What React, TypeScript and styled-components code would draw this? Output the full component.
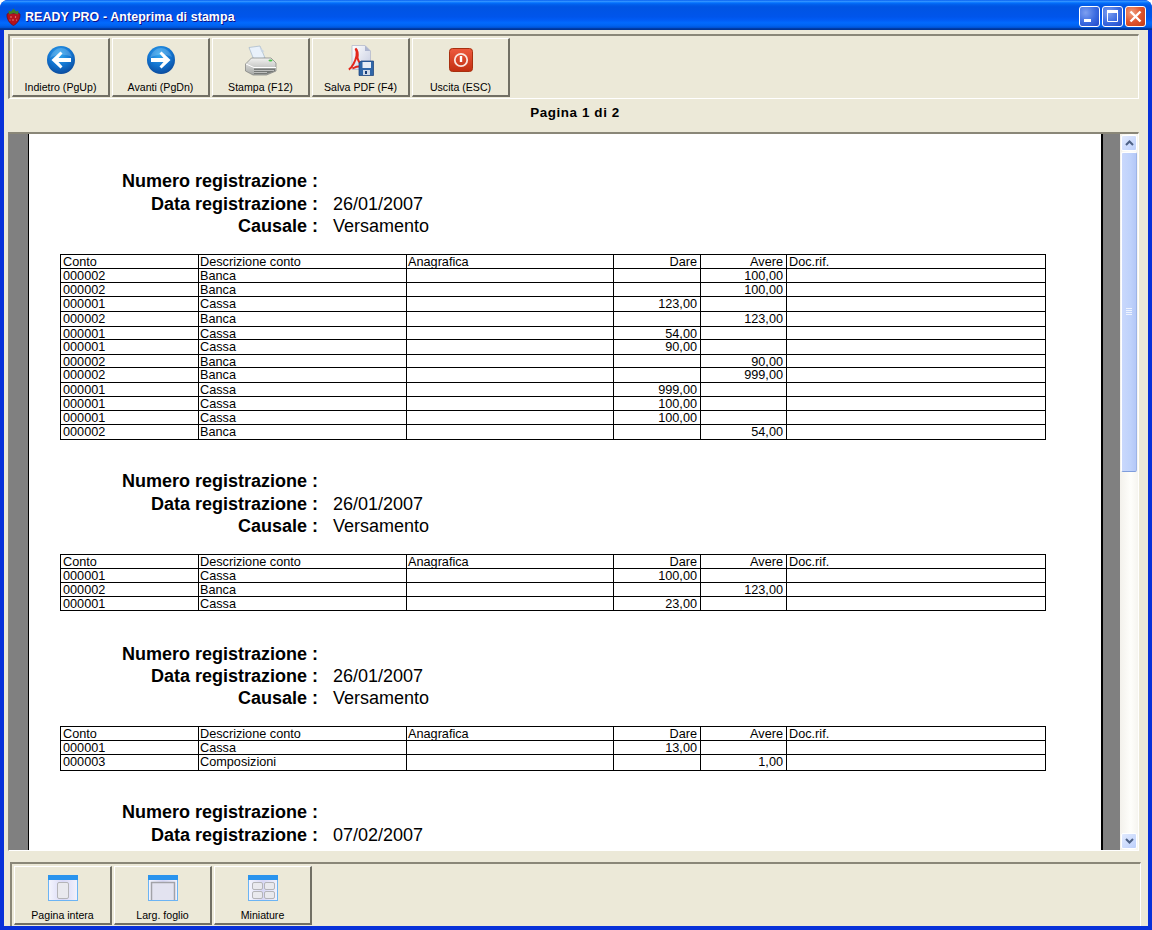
import React from "react";
import styled, { createGlobalStyle } from "styled-components";

const Global = createGlobalStyle`
  html, body { margin: 0; padding: 0; background: #fff; overflow: hidden; }
  #root { width: 1152px; height: 930px; }
  * { box-sizing: border-box; }
`;

const Win = styled.div`
  width: 1152px;
  height: 930px;
  display: flex;
  flex-direction: column;
  background: #0831d9;
  border-radius: 8px 8px 0 0;
  overflow: hidden;
  font-family: "Liberation Sans", Arial, sans-serif;
`;

const TitleBar = styled.div`
  height: 30px;
  flex: none;
  display: flex;
  align-items: center;
  padding: 0 6px 0 6px;
  background: linear-gradient(180deg, #0058ee 0%, #3593ff 4%, #288eff 6%, #127dff 8%, #036ffc 10%, #0262ee 14%, #0057e5 20%, #0054e3 24%, #0055eb 56%, #005bf5 66%, #026afe 76%, #0062ef 86%, #0052d6 92%, #0040ab 94%, #003092 100%);
`;

const TitleIcon = styled.div`
  display: flex;
  margin-top: 3px;
`;

const TitleText = styled.span`
  margin: 3px 0 0 4px;
  flex: 1;
  color: #fff;
  font: bold 12.4px "Liberation Sans", sans-serif;
  letter-spacing: 0.1px;
  text-shadow: 1px 1px 0 #0f1089;
`;

const WinButtons = styled.div`
  display: flex;
  gap: 2px;
  margin-top: 3px;
`;

const WinButton = styled.div<{ $close?: boolean }>`
  width: 21px;
  height: 21px;
  border: 1px solid #fff;
  border-radius: 3px;
  display: flex;
  align-items: center;
  justify-content: center;
  background: ${(p) =>
    p.$close
      ? "radial-gradient(circle at 30% 30%, #f0a080 0%, #e0552e 50%, #c23a12 100%)"
      : "radial-gradient(circle at 30% 30%, #7d9ff0 0%, #3a6ae0 55%, #2148c8 100%)"};
`;

const Client = styled.div`
  flex: 1;
  margin: 0 4px 4px 4px;
  background: #ece9d8;
  display: flex;
  flex-direction: column;
  min-height: 0;
`;

const TopFrame = styled.div`
  margin: 4px 9px 0 4px;
  height: 65px;
  flex: none;
  border-top: 2px solid #8a8778;
  border-left: 2px solid #8a8778;
  border-right: 1px solid #fff;
  border-bottom: 1px solid #fff;
  padding: 2px 0 0 2px;
  display: flex;
  gap: 2px;
`;

const BottomFrame = styled.div`
  margin: 11px 7px 0 6px;
  flex: 1;
  border-top: 2px solid #8a8778;
  border-left: 2px solid #8a8778;
  border-right: 1px solid #fff;
  padding: 2px 0 0 2px;
  display: flex;
  gap: 2px;
`;

const ToolButton = styled.div`
  width: 98px;
  height: 59px;
  background: #ece9d8;
  border-top: 1px solid #fff;
  border-left: 1px solid #fff;
  border-right: 2px solid #716f64;
  border-bottom: 2px solid #716f64;
  display: flex;
  flex-direction: column;
  align-items: center;
  color: #000;
`;

const IconSlot = styled.div<{ $h: number }>`
  height: ${(p) => p.$h}px;
  display: flex;
  align-items: flex-end;
  justify-content: center;
  flex: none;
`;

const ToolLabel = styled.span`
  margin-top: auto;
  margin-bottom: 1px;
  font-size: 10.6px;
  line-height: 13px;
  white-space: nowrap;
`;

const PageCount = styled.div`
  height: 33px;
  flex: none;
  display: flex;
  align-items: center;
  justify-content: center;
  padding: 0 2px 6px 0;
  font: bold 13.4px "Liberation Sans", sans-serif;
  letter-spacing: 0.6px;
  color: #000;
`;

const Preview = styled.div`
  margin: 0 9px 0 4px;
  height: 719px;
  flex: none;
  display: flex;
  background: #808080;
  border-top: 2px solid #8a8778;
  border-left: 1px solid #8a8778;
  border-right: 1px solid #fff;
  border-bottom: 1px solid #fff;
  overflow: hidden;
`;

const Gutter = styled.div<{ $w: number }>`
  width: ${(p) => p.$w}px;
  flex: none;
`;

const Sheet = styled.div`
  width: 1075px;
  flex: none;
  background: #fff;
  border-left: 1px solid #000;
  border-right: 2px solid #000;
  padding: 36px 0 0 31px;
  color: #000;
  overflow: hidden;
`;

const Entry = styled.section<{ $top: number }>`
  margin-top: ${(p) => p.$top}px;
`;

const EntryHead = styled.div<{ $gap: number; $row: number }>`
  display: grid;
  grid-template-columns: 258px auto;
  column-gap: 15px;
  grid-auto-rows: ${(p) => p.$row}px;
  font-size: 18px;
  line-height: 22px;
  margin-bottom: ${(p) => p.$gap}px;
`;

const HeadLabel = styled.div`
  font-weight: bold;
  text-align: right;
  white-space: nowrap;
`;

const HeadValue = styled.div`
  white-space: nowrap;
`;

const Ledger = styled.table`
  width: 985px;
  table-layout: fixed;
  border-collapse: collapse;
  font-size: 12.7px;
`;

const Row = styled.tr<{ $h: number }>`
  height: ${(p) => p.$h}px;
`;

const Cell = styled.td<{ $num?: boolean; $tight?: boolean }>`
  border: 1px solid #000;
  padding: 2px ${(p) => (p.$num ? "3px" : "0")} 0 ${(p) => (p.$num ? "0" : p.$tight ? "1px" : "2px")};
  text-align: ${(p) => (p.$num ? "right" : "left")};
  line-height: 10px;
  vertical-align: top;
  white-space: nowrap;
  overflow: hidden;
`;

const Scroll = styled.div`
  width: 18px;
  flex: none;
  padding: 1px;
  display: flex;
  flex-direction: column;
  background: linear-gradient(90deg, #f3f1ec, #fefefb 60%, #f6f5f0);
`;

const ScrollBtn = styled.div`
  height: 16px;
  flex: none;
  border: 1px solid #fff;
  border-radius: 2px;
  background: linear-gradient(135deg, #e1eafe, #bdd0fb);
  display: flex;
  align-items: center;
  justify-content: center;
`;

const Thumb = styled.div`
  height: 320px;
  margin-top: 1px;
  flex: none;
  border: 1px solid #fff;
  border-right-color: #9db4e8;
  border-bottom-color: #7f9ddc;
  border-radius: 2px;
  background: linear-gradient(90deg, #c9d8fc, #bfd2fb 60%, #b4c8f7);
  display: flex;
  align-items: center;
  justify-content: center;
`;

const Track = styled.div`
  flex: 1;
`;

const Strawberry = () => (
  <svg width="15" height="18" viewBox="0 0 15 18">
    <path d="M7.500 17.500C4 16 .5 11 1 6.500 2 4 5 5 7.500 5.500c2.500-.5 5.500-1.500 6.500 1 .5 4.500-3 9.500-6.500 11z" fill="#b5121c" stroke="#6a0c14" strokeWidth=".7" />
    <path d="M2.500 2.500 5 3.500 7.500 .5 10 3.500l2.500-1L12 6.500 7.500 5 3 6.500z" fill="#3f7f28" />
    <g fill="#ef9d96"><circle cx="5" cy="9" r=".7" /><circle cx="9.500" cy="9" r=".7" /><circle cx="7" cy="12" r=".7" /><circle cx="4" cy="12" r=".5" /><circle cx="10.500" cy="12" r=".5" /></g>
  </svg>
);

const Arrow = ({ dir }: { dir: "l" | "r" }) => (
  <svg width="30" height="30" viewBox="0 0 30 30">
    <defs>
      <radialGradient id={`ball${dir}`} cx="45%" cy="30%" r="75%">
        <stop offset="0" stopColor="#36a9f0" />
        <stop offset=".55" stopColor="#1273cf" />
        <stop offset="1" stopColor="#0a4596" />
      </radialGradient>
    </defs>
    <circle cx="15" cy="15" r="14" fill={`url(#ball${dir})`} />
    <path d="M4 13C6 6 11 3 15 3s9 3 11 9c-6-3-16-3-22 1z" fill="#fff" opacity=".18" />
    <path d={dir === "l" ? "M5.500 15 14.500 6.500l2 2-4 4.500H25v4H12.500l4 4.500-2 2z" : "M24.500 15 15.500 6.500l-2 2 4 4.500H5v4H17.500l-4 4.500 2 2z"} fill="#fff" />
  </svg>
);

const Printer = () => (
  <svg width="32" height="31" viewBox="0 0 32 31">
    <defs>
      <linearGradient id="pbody" x1="0" y1="0" x2="0" y2="1"><stop offset="0" stopColor="#f2f2f0" /><stop offset="1" stopColor="#a4a6a4" /></linearGradient>
    </defs>
    <path d="M4 2.500 15 1l5 12-11 2z" fill="#e9f1fa" stroke="#a3b6ca" strokeWidth=".7" />
    <path d="M14.500 2 16.500 7l3-.5z" fill="#c8d5e4" />
    <path d="M.5 19 6.500 13H26l5 5v8l-9.500 4H8L.5 26z" fill="url(#pbody)" stroke="#7c7e7c" strokeWidth=".7" />
    <path d="M1 19l8 3.500h22" fill="none" stroke="#fff" strokeWidth="1" />
    <path d="M9 23.500h21V26l-8.500 3H9z" fill="#757876" />
    <path d="M9 25.500h20M9 27.500h13" stroke="#cfd1cf" strokeWidth=".8" />
    <ellipse cx="25.500" cy="15.500" rx="2" ry="1" fill="#4cc24a" />
  </svg>
);

const PdfSave = () => (
  <svg width="26" height="31" viewBox="0 0 26 31">
    <defs>
      <linearGradient id="doc" x1="0" y1="0" x2="1" y2="1"><stop offset="0" stopColor="#fff" /><stop offset="1" stopColor="#c5cbe0" /></linearGradient>
    </defs>
    <path d="M4 .5h13l5.500 5.500v18.500H4z" fill="url(#doc)" stroke="#b5bacb" strokeWidth=".8" />
    <path d="M17 .5V6h5.500z" fill="#aeb6d0" />
    <path d="M.8 24.500C4 23 7.500 16 8.500 11 9 7 8.500 5 7.500 3.500 9.500 5 10 9 9.500 13c1 4 3 7 6.500 8.500-4-.5-9 .5-11.500 2" fill="none" stroke="#e3261b" strokeWidth="2" />
    <path d="M13 16h12.500v14.500H11V18z" fill="#2f66a8" stroke="#173e78" strokeWidth=".7" />
    <rect x="14.500" y="17" width="8.500" height="6" fill="#e7edf6" />
    <rect x="15" y="25" width="7" height="5" fill="#cfd9e8" />
    <rect x="17" y="26" width="2" height="3" fill="#173e78" />
  </svg>
);

const Power = () => (
  <svg width="24" height="24" viewBox="0 0 24 24">
    <defs>
      <linearGradient id="pw" x1="0" y1="0" x2="0" y2="1"><stop offset="0" stopColor="#ee5a3e" /><stop offset="1" stopColor="#c22e10" /></linearGradient>
    </defs>
    <rect x=".5" y=".5" width="23" height="23" rx="3" fill="url(#pw)" stroke="#a8300f" />
    <circle cx="12" cy="12" r="6.200" fill="none" stroke="#fbe6df" strokeWidth="1.800" />
    <rect x="10.800" y="8" width="2.400" height="6" fill="#fff" />
  </svg>
);

const LayoutIcon = ({ kind }: { kind: "full" | "width" | "thumbs" }) => (
  <svg width="30" height="26" viewBox="0 0 30 26">
    <defs>
      <linearGradient id={`lay${kind}`} x1="0" y1="0" x2="1" y2="0">
        <stop offset="0" stopColor="#f5f6fe" /><stop offset=".5" stopColor="#d8d8f6" /><stop offset="1" stopColor="#f2f2fc" />
      </linearGradient>
    </defs>
    <rect x=".5" y=".5" width="29" height="25" fill={`url(#lay${kind})`} stroke="#6cb4f4" />
    <rect x="0" y="0" width="30" height="5" fill="#2a94ee" />
    {kind === "full" && <rect x="9.500" y="7.500" width="11" height="16" rx="1.500" fill="#e9e9ee" stroke="#b4b4b8" />}
    {kind === "width" && <path d="M3.500 25V7.500h23V25" fill="#e3e3f0" stroke="#a2a2a8" strokeWidth="1.500" />}
    {kind === "thumbs" && (
      <g fill="#e9e9ee" stroke="#b4b4b8">
        <rect x="4.500" y="7.500" width="10" height="7" rx="1.500" />
        <rect x="16.500" y="7.500" width="10" height="7" rx="1.500" />
        <rect x="4.500" y="16.500" width="10" height="7" rx="1.500" />
        <rect x="16.500" y="16.500" width="10" height="7" rx="1.500" />
      </g>
    )}
  </svg>
);

type Line = [string, string, string, string, number];

const COLS = [138, 208, 207, 87, 86, 259];

const Table = ({ rows }: { rows: Line[] }) => (
  <Ledger>
    <colgroup>{COLS.map((w, i) => <col key={i} width={w} />)}</colgroup>
    <tbody>
      <Row $h={14}>
        <Cell>Conto</Cell><Cell $tight>Descrizione conto</Cell><Cell $tight>Anagrafica</Cell>
        <Cell $num>Dare</Cell><Cell $num>Avere</Cell><Cell>Doc.rif.</Cell>
      </Row>
      {rows.map((r, i) => (
        <Row key={i} $h={r[4]}>
          <Cell>{r[0]}</Cell><Cell $tight>{r[1]}</Cell><Cell />
          <Cell $num>{r[2]}</Cell><Cell $num>{r[3]}</Cell><Cell />
        </Row>
      ))}
    </tbody>
  </Ledger>
);

const Head = ({ date, cause, gap = 16.4, row = 22.6 }: { date: string; cause?: string; gap?: number; row?: number }) => (
  <EntryHead $gap={gap} $row={row}>
    <HeadLabel>Numero registrazione :</HeadLabel><HeadValue />
    <HeadLabel>Data registrazione :</HeadLabel><HeadValue>{date}</HeadValue>
    {cause && <><HeadLabel>Causale :</HeadLabel><HeadValue>{cause}</HeadValue></>}
  </EntryHead>
);

const t1: Line[] = [
  ["000002", "Banca", "", "100,00", 14],
  ["000002", "Banca", "", "100,00", 14],
  ["000001", "Cassa", "123,00", "", 15],
  ["000002", "Banca", "", "123,00", 15],
  ["000001", "Cassa", "54,00", "", 13],
  ["000001", "Cassa", "90,00", "", 15],
  ["000002", "Banca", "", "90,00", 13],
  ["000002", "Banca", "", "999,00", 15],
  ["000001", "Cassa", "999,00", "", 14],
  ["000001", "Cassa", "100,00", "", 14],
  ["000001", "Cassa", "100,00", "", 14],
  ["000002", "Banca", "", "54,00", 15],
];
const t2: Line[] = [
  ["000001", "Cassa", "100,00", "", 14],
  ["000002", "Banca", "", "123,00", 14],
  ["000001", "Cassa", "23,00", "", 14],
];
const t3: Line[] = [
  ["000001", "Cassa", "13,00", "", 14],
  ["000003", "Composizioni", "", "1,00", 16],
];

const tools: [React.ReactNode, string, number][] = [
  [<Arrow dir="l" />, "Indietro (PgUp)", 36],
  [<Arrow dir="r" />, "Avanti (PgDn)", 36],
  [<Printer />, "Stampa (F12)", 37],
  [<PdfSave />, "Salva PDF (F4)", 37],
  [<Power />, "Uscita (ESC)", 33],
];
const views: [React.ReactNode, string][] = [
  [<LayoutIcon kind="full" />, "Pagina intera"],
  [<LayoutIcon kind="width" />, "Larg. foglio"],
  [<LayoutIcon kind="thumbs" />, "Miniature"],
];

export default function App() {
  return (
    <Win>
      <Global />
      <TitleBar>
        <TitleIcon><Strawberry /></TitleIcon>
        <TitleText>READY PRO - Anteprima di stampa</TitleText>
        <WinButtons>
          <WinButton>
            <svg width="19" height="19" viewBox="0 0 19 19"><rect x="4" y="12" width="7" height="3" fill="#fff" /></svg>
          </WinButton>
          <WinButton>
            <svg width="19" height="19" viewBox="0 0 19 19"><path d="M4.500 3.500h10v11h-10z" fill="none" stroke="#fff" /><rect x="4" y="3" width="11" height="3" fill="#fff" /></svg>
          </WinButton>
          <WinButton $close>
            <svg width="19" height="19" viewBox="0 0 19 19"><path d="M4.500 4.500l10 10M14.500 4.500l-10 10" stroke="#fff" strokeWidth="2.400" /></svg>
          </WinButton>
        </WinButtons>
      </TitleBar>
      <Client>
        <TopFrame>
          {tools.map(([icon, label, h]) => (
            <ToolButton key={label}>
              <IconSlot $h={h}>{icon}</IconSlot>
              <ToolLabel>{label}</ToolLabel>
            </ToolButton>
          ))}
        </TopFrame>
        <PageCount>Pagina 1 di 2</PageCount>
        <Preview>
          <Gutter $w={19} />
          <Sheet>
            <Entry $top={0}>
              <Head date="26/01/2007" cause="Versamento" />
              <Table rows={t1} />
            </Entry>
            <Entry $top={30}>
              <Head date="26/01/2007" cause="Versamento" />
              <Table rows={t2} />
            </Entry>
            <Entry $top={32}>
              <Head date="26/01/2007" cause="Versamento" gap={16.2} row={22} />
              <Table rows={t3} />
            </Entry>
            <Entry $top={30}>
              <Head date="07/02/2007" row={23} />
            </Entry>
          </Sheet>
          <Gutter $w={17} />
          <Scroll>
            <ScrollBtn>
              <svg width="9" height="6" viewBox="0 0 9 6"><path d="M1 5l3.500-3.500L8 5" fill="none" stroke="#4d6185" strokeWidth="2" /></svg>
            </ScrollBtn>
            <Thumb>
              <svg width="8" height="8" viewBox="0 0 8 8"><path d="M1 .5h6M1 2.500h6M1 4.500h6M1 6.500h6" stroke="#eef3ff" /></svg>
            </Thumb>
            <Track />
            <ScrollBtn>
              <svg width="9" height="6" viewBox="0 0 9 6"><path d="M1 1l3.500 3.500L8 1" fill="none" stroke="#4d6185" strokeWidth="2" /></svg>
            </ScrollBtn>
          </Scroll>
        </Preview>
        <BottomFrame>
          {views.map(([icon, label]) => (
            <ToolButton key={label}>
              <IconSlot $h={34}>{icon}</IconSlot>
              <ToolLabel>{label}</ToolLabel>
            </ToolButton>
          ))}
        </BottomFrame>
      </Client>
    </Win>
  );
}
